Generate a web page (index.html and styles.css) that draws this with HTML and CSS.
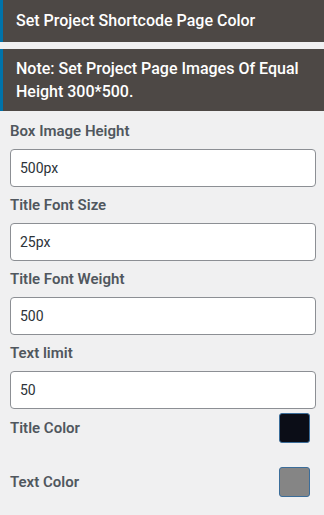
FILE: index.html
```html
<!DOCTYPE html>
<html lang="en">

<head>
    <meta charset="UTF-8">
    <meta name="viewport" content="width=device-width, initial-scale=1.0">
    <title>Project Shortcode Settings</title>
    <link rel="stylesheet" href="styles.css">
</head>

<body>
    <div class="section-title">Set Project Shortcode Page Color</div>
    <div class="section-title note">Note: Set Project Page Images Of Equal Height 300*500.</div>

    <div class="settings">
        <div class="field">
            <label for="box-height">Box Image Height</label>
            <input type="text" id="box-height" value="500px">
        </div>
        <div class="field">
            <label for="title-size">Title Font Size</label>
            <input type="text" id="title-size" value="25px">
        </div>
        <div class="field">
            <label for="title-weight">Title Font Weight</label>
            <input type="text" id="title-weight" value="500">
        </div>
        <div class="field">
            <label for="text-limit">Text limit</label>
            <input type="text" id="text-limit" value="50">
        </div>

        <!-- colour pickers -->
        <div class="colors">
            <div class="color-row">
                <span class="color-label">Title Color</span>
                <span class="swatch swatch-dark"></span>
            </div>
            <div class="color-row">
                <span class="color-label">Text Color</span>
                <span class="swatch swatch-grey"></span>
            </div>
        </div>
    </div>
</body>

</html>
```

FILE: styles.css
```css
body {
    font-family: Roboto, "Liberation Sans", Arial, sans-serif;
    margin: 0;
    background-color: #f0f0f1;
    color: #50575e;
}

.section-title {
    background-color: #4d4845;
    color: #fff;
    border-left: 3px solid #0073aa;
    font-size: 16px;
    font-weight: 500;
    line-height: 22px;
    padding: 10px 13px;
    margin-bottom: 7px;
}

.note {
    line-height: 23px;
    padding: 8px 13px;
    margin-bottom: 0;
}

.settings {
    padding: 10px 8px 0 10px;
}

.field {
    display: flex;
    flex-direction: column;
    margin-bottom: 8px;
}

.field label {
    font-size: 15px;
    font-weight: 600;
    line-height: 20px;
    margin-bottom: 8px;
}

.field input {
    font-family: inherit;
    font-size: 14px;
    color: #2c3338;
    height: 38px;
    box-sizing: border-box;
    padding: 0 9px;
    border: 1px solid #8c8f94;
    border-radius: 4px;
    background-color: #fff;
}

.colors {
    padding-top: 4px;
    margin-top: -8px;
}

.color-row {
    display: flex;
    align-items: center;
    justify-content: space-between;
    padding-right: 6px;
    margin-bottom: 24px;
}

.color-label {
    font-size: 15px;
    font-weight: 600;
}

.swatch {
    width: 31px;
    height: 30px;
    box-sizing: border-box;
    border: 1px solid #3b6d9a;
    border-radius: 3px;
}

.swatch-dark {
    background-color: #0b0d17;
}

.swatch-grey {
    background-color: #858585;
}
```
